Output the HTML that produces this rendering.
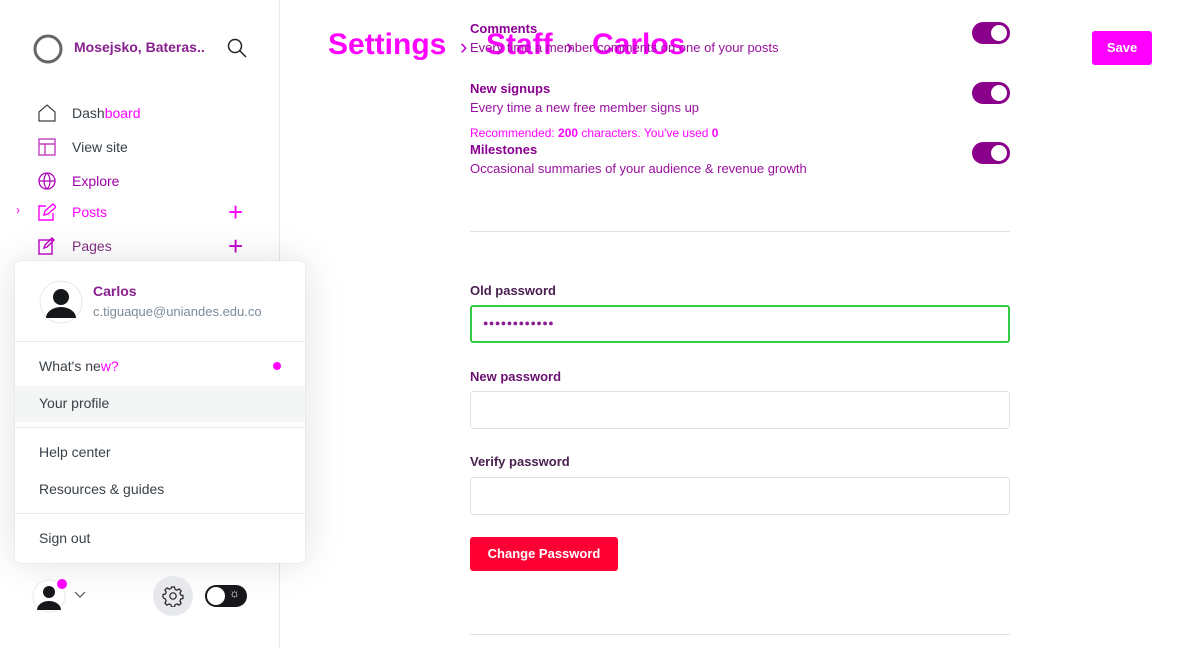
<!DOCTYPE html>
<html><head><meta charset="utf-8"><style>
*{box-sizing:border-box;margin:0;padding:0}
body{width:1200px;height:648px;overflow:hidden;background:#fff;font-family:"Liberation Sans",sans-serif;position:relative;color:#394047}
.abs{position:absolute}
.side{left:0;top:0;width:280px;height:648px;border-right:1px solid #e6e8eb;background:#fff}
.nav{font-size:14px;color:#394047}
.mg{color:#ff00ff}
.pu{color:#a000a8}
.menu{left:15px;top:261px;width:290px;height:302px;background:#fff;border-radius:5px;box-shadow:0 0 40px rgba(0,0,0,.12),0 0 1px rgba(0,0,0,.2)}
.mi{position:absolute;left:24px;font-size:14px;color:#394047}
.hr{position:absolute;left:0;width:290px;height:1px;background:#e6e8eb}
.lbl{font-size:13px;font-weight:bold;color:#8a0090}
.inp{left:470px;width:540px;height:38px;border:1px solid #dde1e5;border-radius:3px}
.tog{width:38px;height:22px;border-radius:11px;background:#8b008b}
.tog:after{content:"";position:absolute;right:3px;top:3px;width:16px;height:16px;border-radius:50%;background:#fff}
</style></head><body>
<div class="abs side"></div>
<svg class="abs" style="left:32px;top:33px" width="32" height="32"><circle cx="16" cy="16" r="13" fill="none" stroke="#666" stroke-width="3"/></svg>
<div class="abs" style="left:74px;top:39px;font-size:14px;font-weight:bold;color:#8a2090">Mosejsko, Bateras..</div>
<svg class="abs" style="left:227px;top:38px" width="20" height="20"><circle cx="8" cy="8" r="6.5" fill="none" stroke="#222" stroke-width="1.5"/><path d="M13 13l6 6" stroke="#222" stroke-width="1.5"/></svg>
<svg class="abs" style="left:38px;top:104px" width="18" height="18"><path d="M1 8L9 1l8 7v9H1z" fill="none" stroke="#394047" stroke-width="1.2"/></svg>
<div class="abs nav" style="left:72px;top:105px">Dash<span class="mg">board</span></div>
<svg class="abs" style="left:38px;top:138px" width="18" height="18"><rect x="1" y="1" width="16" height="16" fill="none" stroke="#c040c0" stroke-width="1.4"/><path d="M1 6h16M7 6v11" stroke="#c040c0" stroke-width="1.4"/></svg>
<div class="abs nav" style="left:72px;top:139px">View site</div>
<svg class="abs" style="left:38px;top:172px" width="18" height="18"><circle cx="9" cy="9" r="8" fill="none" stroke="#b000b8" stroke-width="1.3"/><path d="M1 9h16M9 1c-4 4-4 12 0 16M9 1c4 4 4 12 0 16" fill="none" stroke="#b000b8" stroke-width="1.2"/></svg>
<div class="abs nav pu" style="left:72px;top:173px">Explore</div>
<div class="abs mg" style="left:16px;top:203px;font-size:12px">›</div>
<svg class="abs" style="left:38px;top:203px" width="18" height="18"><path d="M8 3H1v14h14V10M6 12l1-4 8-7 3 3-8 7z" fill="none" stroke="#ff00ff" stroke-width="1.4"/></svg>
<div class="abs nav mg" style="left:72px;top:204px">Posts</div>
<div class="abs mg" style="left:228px;top:197px;font-size:26px;font-weight:300">+</div>
<svg class="abs" style="left:38px;top:237px" width="18" height="18"><rect x="1" y="3" width="13" height="14" fill="none" stroke="#c000c8" stroke-width="1.4"/><path d="M6 11l1-3 7-7 2 2-7 7z" fill="none" stroke="#c000c8" stroke-width="1.4"/></svg>
<div class="abs nav" style="left:72px;top:238px;color:#803080">Pages</div>
<div class="abs" style="left:228px;top:231px;font-size:26px;color:#c000c8;font-weight:300">+</div>

<div class="abs menu">
<svg style="position:absolute;left:24px;top:19px" width="44" height="44"><circle cx="22" cy="22" r="21" fill="#fff" stroke="#e6e8eb"/><circle cx="22" cy="17" r="8" fill="#15171a"/><path d="M7 38a15 11 0 0 1 30 0z" fill="#15171a"/></svg>
<div style="position:absolute;left:78px;top:22px;font-size:14px;font-weight:bold;color:#8a2090">Carlos</div>
<div style="position:absolute;left:78px;top:43px;font-size:13px;color:#7c8b9a">c.tiguaque@uniandes.edu.co</div>
<div class="hr" style="top:80px"></div>
<div class="mi" style="top:97px">What's ne<span class="mg">w?</span></div>
<div style="position:absolute;left:258px;top:101px;width:8px;height:8px;border-radius:50%;background:#f0f"></div>
<div style="position:absolute;left:0;top:125px;width:290px;height:36px;background:#f4f5f5"></div>
<div class="mi" style="top:134px">Your profile</div>
<div class="hr" style="top:166px"></div>
<div class="mi" style="top:183px">Help center</div>
<div class="mi" style="top:220px">Resources &amp; guides</div>
<div class="hr" style="top:252px"></div>
<div class="mi" style="top:269px">Sign out</div>
</div>

<svg class="abs" style="left:32px;top:578px" width="36" height="36"><circle cx="17" cy="18" r="16" fill="#fff" stroke="#e6e8eb"/><circle cx="17" cy="14" r="6" fill="#15171a"/><path d="M5 32a12 9 0 0 1 24 0z" fill="#15171a"/><circle cx="30" cy="6" r="5" fill="#f0f"/></svg>
<svg class="abs" style="left:74px;top:591px" width="12" height="8"><path d="M1 1l5 5 5-5" fill="none" stroke="#555" stroke-width="1.2"/></svg>
<div class="abs" style="left:153px;top:576px;width:40px;height:40px;border-radius:50%;background:#e6e8eb"></div>
<svg class="abs" style="left:162px;top:585px" width="22" height="22"><path d="M9.5 2h3l.6 2.4 1.9.8 2.1-1.3 2.1 2.1-1.3 2.1.8 1.9 2.3.5v3l-2.3.6-.8 1.9 1.3 2.1-2.1 2.1-2.1-1.3-1.9.8-.6 2.3h-3l-.5-2.3-1.9-.8-2.1 1.3-2.1-2.1 1.3-2.1-.8-1.9L1 12.5v-3l2.4-.5.8-1.9-1.3-2.1L5 2.9l2.1 1.3L9 3.4z" fill="none" stroke="#222" stroke-width="1.2" stroke-linejoin="round"/><circle cx="11" cy="11" r="3.2" fill="none" stroke="#222" stroke-width="1.2"/></svg>
<div class="abs" style="left:205px;top:585px;width:42px;height:22px;border-radius:11px;background:#15171a"></div>
<div class="abs" style="left:207px;top:587px;width:18px;height:18px;border-radius:50%;background:#fff"></div>
<div class="abs" style="left:229px;top:586px;color:#fff;font-size:12px">☼</div>

<div class="abs" style="left:328px;top:28px;font-size:30px;font-weight:bold;color:#f0f">Settings</div>
<div class="abs" style="left:460px;top:34px;font-size:22px;color:#c000c8">›</div>
<div class="abs" style="left:486px;top:28px;font-size:30px;font-weight:bold;color:#f0f">Staff</div>
<div class="abs" style="left:566px;top:34px;font-size:22px;color:#c000c8">›</div>
<div class="abs" style="left:592px;top:28px;font-size:30px;font-weight:bold;color:#f0f">Carlos</div>

<div class="abs lbl" style="left:470px;top:21px">Comments</div>
<div class="abs" style="left:470px;top:40px;font-size:13px;color:#9a10a0">Every time a member comments on one of your posts</div>
<div class="abs tog" style="left:972px;top:22px"></div>
<div class="abs lbl" style="left:470px;top:81px">New signups</div>
<div class="abs" style="left:470px;top:100px;font-size:13px;color:#9a10a0">Every time a new free member signs up</div>
<div class="abs tog" style="left:972px;top:82px"></div>
<div class="abs" style="left:470px;top:126px;font-size:12px;color:#f0f">Recommended: <b>200</b> characters. You've used <b>0</b></div>
<div class="abs lbl" style="left:470px;top:142px">Milestones</div>
<div class="abs" style="left:470px;top:161px;font-size:13px;color:#9a10a0">Occasional summaries of your audience &amp; revenue growth</div>
<div class="abs tog" style="left:972px;top:142px"></div>
<div class="abs" style="left:470px;top:231px;width:540px;height:1px;background:#dde1e5"></div>

<div class="abs" style="left:1092px;top:31px;width:60px;height:34px;background:#f0f;border-radius:3px;color:#fff;font-size:13px;font-weight:bold;text-align:center;line-height:34px">Save</div>

<div class="abs lbl" style="left:470px;top:283px;color:#4a2050">Old password</div>
<div class="abs inp" style="top:305px;border:2px solid #30cf43"></div>
<div class="abs" style="left:483px;top:318px;font-size:9px;color:#8a2090;letter-spacing:0.5px">●●●●●●●●●●●●</div>
<div class="abs lbl" style="left:470px;top:369px;color:#6a1070">New password</div>
<div class="abs inp" style="top:391px"></div>
<div class="abs lbl" style="left:470px;top:454px;color:#4a2050">Verify password</div>
<div class="abs inp" style="top:477px"></div>
<div class="abs" style="left:470px;top:537px;width:148px;height:34px;background:#ff0035;border-radius:3px;color:#fff;font-size:13px;font-weight:bold;text-align:center;line-height:34px">Change Password</div>
<div class="abs" style="left:470px;top:634px;width:540px;height:1px;background:#dde1e5"></div>
</body></html>
